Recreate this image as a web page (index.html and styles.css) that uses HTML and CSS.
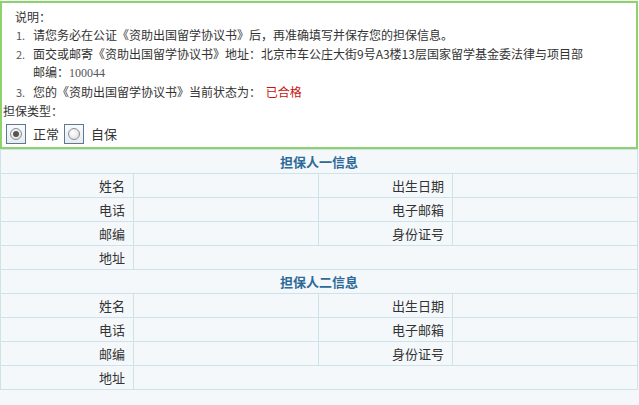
FILE: index.html
```html
<!DOCTYPE html>
<html lang="zh-CN">
<head>
    <meta charset="UTF-8">
    <title>担保人信息</title>
    <link rel="stylesheet" href="styles.css">
</head>
<body>
    <!-- 说明 -->
    <div class="notice">
        <div class="notice-title">说明：</div>
        <ol class="notice-list">
            <li>请您务必在公证《资助出国留学协议书》后，再准确填写并保存您的担保信息。</li>
            <li>面交或邮寄《资助出国留学协议书》地址：北京市车公庄大街9号A3楼13层国家留学基金委法律与项目部<br>邮编：<span class="num">100044</span></li>
            <li>您的《资助出国留学协议书》当前状态为： <span class="status">已合格</span></li>
        </ol>
        <div class="type-label">担保类型：</div>
        <div class="radio-row">
            <span class="radio-box"><span class="radio-dot checked"></span></span>
            <span class="radio-text">正常</span>
            <span class="radio-box"><span class="radio-dot"></span></span>
            <span class="radio-text">自保</span>
        </div>
    </div>

    <table class="info-table">
        <colgroup>
            <col class="col-label"><col class="col-value"><col class="col-label2"><col class="col-value">
        </colgroup>
        <tr><th colspan="4">担保人一信息</th></tr>
        <tr><td class="label">姓名</td><td></td><td class="label">出生日期</td><td></td></tr>
        <tr><td class="label">电话</td><td></td><td class="label">电子邮箱</td><td></td></tr>
        <tr><td class="label">邮编</td><td></td><td class="label">身份证号</td><td></td></tr>
        <tr><td class="label">地址</td><td colspan="3"></td></tr>
        <tr><th colspan="4">担保人二信息</th></tr>
        <tr><td class="label">姓名</td><td></td><td class="label">出生日期</td><td></td></tr>
        <tr><td class="label">电话</td><td></td><td class="label">电子邮箱</td><td></td></tr>
        <tr><td class="label">邮编</td><td></td><td class="label">身份证号</td><td></td></tr>
        <tr><td class="label">地址</td><td colspan="3"></td></tr>
    </table>
</body>
</html>
```

FILE: styles.css
```css
body {
    margin: 0;
    background-color: #f4f8fb;
    font-family: "Noto Sans CJK SC", "DejaVu Sans", sans-serif;
    font-size: 12px;
    color: #333;
}

/* 说明框 */
.notice {
    margin: 1px 1px 0 0;
    border: 2px solid #8ed26c;
    background-color: #fff;
    padding: 5px 0 2px 0;
    line-height: 18px;
}

.notice-title {
    padding-left: 13px;
}

.notice-list {
    list-style: none;
    margin: 0;
    padding-left: 31px;
    counter-reset: item;
}

.notice-list li {
    counter-increment: item;
    margin-bottom: 1px;
}

.notice-list li::before {
    content: counter(item) ".";
    display: inline-block;
    width: 17px;
    margin-left: -17px;
    color: #555;
    font-size: 11px;
}

.num {
    font-family: "Liberation Serif", serif;
    font-size: 12px;
    color: #555;
}

.status {
    color: #cc1111;
    margin-left: 2px;
}

.type-label {
    padding-left: 1px;
}

.radio-row {
    display: flex;
    align-items: center;
    padding-left: 4px;
    margin-top: 3px;
    height: 22px;
}

.radio-box {
    width: 18px;
    height: 18px;
    border: 1px solid #5d7894;
    background: linear-gradient(#fafafa, #e8ebee);
    display: flex;
    align-items: center;
    justify-content: center;
}

.radio-dot {
    width: 10px;
    height: 10px;
    border: 1px solid #8a8f96;
    border-radius: 50%;
    background: radial-gradient(circle at 40% 40%, #ffffff, #d8d8d8);
    position: relative;
}

.radio-dot.checked::after {
    content: "";
    position: absolute;
    left: 2px;
    top: 2px;
    width: 6px;
    height: 6px;
    border-radius: 50%;
    background-color: #555;
}

.radio-text {
    margin: 0 5px 0 7px;
    font-size: 13px;
}

/* 担保人信息表 */
.info-table {
    width: 638px;
    border-collapse: collapse;
    margin-top: 0;
    font-size: 13px;
}

.col-label { width: 133px; }
.col-label2 { width: 134px; }
.col-value { width: 185px; }

.info-table th,
.info-table td {
    border: 1px solid #cde3ea;
    height: 23px;
    padding: 0;
}

.info-table th {
    color: #2e6a98;
    font-weight: bold;
    text-align: center;
}

.info-table td.label {
    text-align: right;
    padding-right: 8px;
}
```
